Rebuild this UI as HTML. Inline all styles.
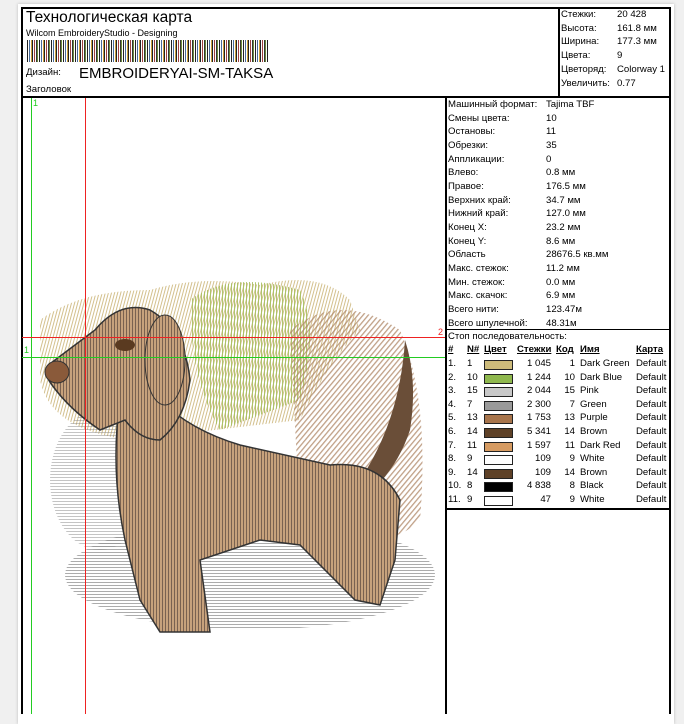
<!DOCTYPE html>
<html><head><meta charset="utf-8"><style>
*{margin:0;padding:0;box-sizing:border-box}
body{width:684px;height:714px;background:#f0f0f0;position:relative;overflow:hidden;font-family:"Liberation Sans",sans-serif;color:#000}
.page{position:absolute;left:18px;top:4px;width:656px;height:720px;background:#fff;box-shadow:0 0 3px #bbb}
.a{position:absolute;white-space:nowrap}
.s{font-size:9.6px}
.ln{position:absolute;background:#000}
</style></head><body>
<div class="page"></div>
<div class="ln" style="left:21px;top:7px;width:650px;height:2px"></div>
<div class="ln" style="left:21px;top:7px;width:1.5px;height:707px"></div>
<div class="ln" style="left:669px;top:7px;width:2px;height:707px"></div>
<div class="ln" style="left:21px;top:96px;width:650px;height:2px"></div>
<div class="ln" style="left:558px;top:7px;width:1.5px;height:90px"></div>
<div class="a" style="left:26px;top:9px;font-size:15.5px">Технологическая карта</div>
<div class="a s" style="left:26px;top:28px;font-size:9px">Wilcom EmbroideryStudio - Designing</div>
<div class="a" style="left:27px;top:40px;width:241px;height:22px;background:repeating-linear-gradient(90deg,#222 0 1px,#fff 1px 2px,#4a6c9a 2px 3px,#fff 3px 4px,#c8a040 4px 5px,#222 5px 6px,#fff 6px 7px,#a04040 7px 8px,#fff 8px 9px,#333 9px 10px,#6a8a3a 10px 11px,#fff 11px 12px)"></div>
<div class="a s" style="left:26px;top:67px">Дизайн:</div>
<div class="a" style="left:79px;top:65px;font-size:15px">EMBROIDERYAI-SM-TAKSA</div>
<div class="a s" style="left:26px;top:84px">Заголовок</div>
<div class="a s" style="left:561px;top:8px;line-height:13.7px">Стежки:<br>Высота:<br>Ширина:<br>Цвета:<br>Цветоряд:<br>Увеличить:</div>
<div class="a s" style="left:617px;top:8px;line-height:13.7px">20 428<br>161.8 мм<br>177.3 мм<br>9<br>Colorway 1<br>0.77</div>
<div class="ln" style="left:445px;top:97px;width:1.5px;height:617px"></div>
<div class="ln" style="left:445px;top:329px;width:226px;height:1px"></div>
<div class="ln" style="left:445px;top:508px;width:226px;height:2px"></div>
<div class="a s" style="left:448px;top:98px;line-height:13.65px">Машинный формат:<br>Смены цвета:<br>Остановы:<br>Обрезки:<br>Аппликации:<br>Влево:<br>Правое:<br>Верхних край:<br>Нижний край:<br>Конец X:<br>Конец Y:<br>Область<br>Макс. стежок:<br>Мин. стежок:<br>Макс. скачок:<br>Всего нити:<br>Всего шпулечной:</div>
<div class="a s" style="left:546px;top:98px;line-height:13.65px">Tajima TBF<br>10<br>11<br>35<br>0<br>0.8 мм<br>176.5 мм<br>34.7 мм<br>127.0 мм<br>23.2 мм<br>8.6 мм<br>28676.5 кв.мм<br>11.2 мм<br>0.0 мм<br>6.9 мм<br>123.47м<br>48.31м</div>
<div class="a s" style="left:448px;top:331px">Стоп последовательность:</div>
<div class="a s" style="left:448px;top:344px;font-weight:bold;text-decoration:underline">#</div>
<div class="a s" style="left:467px;top:344px;font-weight:bold;text-decoration:underline">N#</div>
<div class="a s" style="left:484px;top:344px;font-weight:bold;text-decoration:underline">Цвет</div>
<div class="a s" style="left:517px;top:344px;font-weight:bold;text-decoration:underline">Стежки</div>
<div class="a s" style="left:556px;top:344px;font-weight:bold;text-decoration:underline">Код</div>
<div class="a s" style="left:580px;top:344px;font-weight:bold;text-decoration:underline">Имя</div>
<div class="a s" style="left:636px;top:344px;font-weight:bold;text-decoration:underline">Карта</div>
<div id="rows"></div>
<script>
var r=[["1.","1","#cdbb7b","1 045","1","Dark Green"],["2.","10","#8fb84e","1 244","10","Dark Blue"],["3.","15","#c8c8c8","2 044","15","Pink"],["4.","7","#9a9a9a","2 300","7","Green"],["5.","13","#a8754c","1 753","13","Purple"],["6.","14","#5e4127","5 341","14","Brown"],["7.","11","#d69b62","1 597","11","Dark Red"],["8.","9","#ffffff","109","9","White"],["9.","14","#5e4127","109","14","Brown"],["10.","8","#000000","4 838","8","Black"],["11.","9","#ffffff","47","9","White"]];
var h="";r.forEach(function(x,i){var y=358+i*13.6;
h+='<div class="a s" style="left:448px;top:'+y+'px">'+x[0]+'</div><div class="a s" style="left:467px;top:'+y+'px">'+x[1]+'</div><div class="a" style="left:484px;top:'+(y+2)+'px;width:29px;height:10px;background:'+x[2]+';border:1px solid #222"></div><div class="a s" style="left:511px;width:40px;text-align:right;top:'+y+'px">'+x[3]+'</div><div class="a s" style="left:552px;width:23px;text-align:right;top:'+y+'px">'+x[4]+'</div><div class="a s" style="left:580px;top:'+y+'px">'+x[5]+'</div><div class="a s" style="left:636px;top:'+y+'px">Default</div>';});
document.getElementById("rows").innerHTML=h;
</script>
<svg style="position:absolute;left:22px;top:98px" width="423" height="616" viewBox="22 98 423 616">
<defs>
<pattern id="v" width="3" height="3" patternUnits="userSpaceOnUse"><rect width="3" height="3" fill="#c7a27c"/><rect width="1" height="3" fill="#7a6250"/></pattern>
<pattern id="y" width="3" height="3" patternUnits="userSpaceOnUse" patternTransform="rotate(15)"><rect width="1" height="3" fill="#c8b070"/></pattern>
<pattern id="g" width="3" height="3" patternUnits="userSpaceOnUse"><rect width="1" height="3" fill="#a8c060"/></pattern>
<pattern id="d" width="4" height="4" patternUnits="userSpaceOnUse" patternTransform="rotate(40)"><rect width="1.3" height="4" fill="#b08868"/></pattern>
<pattern id="h" width="6" height="3" patternUnits="userSpaceOnUse"><rect width="6" height="1" fill="#888"/></pattern>
</defs>
<path d="M40 320 Q80 290 150 290 Q200 275 260 285 Q320 270 350 300 L360 330 Q330 360 300 420 L130 440 Q50 430 40 380Z" fill="url(#y)" opacity=".8"/>
<path d="M190 300 Q230 270 300 290 Q320 330 300 400 L220 430 Q190 380 190 300Z" fill="url(#g)" opacity=".9"/>
<path d="M290 330 Q340 290 400 330 Q430 400 420 520 Q380 560 300 520Z" fill="url(#d)" opacity=".8"/>
<ellipse cx="250" cy="575" rx="185" ry="55" fill="url(#h)" opacity=".7"/>
<ellipse cx="100" cy="480" rx="50" ry="70" fill="url(#h)" opacity=".5"/>
<path d="M360 480 Q400 420 405 340 Q418 380 410 430 Q395 475 360 500Z" fill="#6a4e38"/>
<path d="M120 400 Q110 470 125 540 L140 600 L160 632 L210 632 L200 560 L260 540 L300 545 L355 600 L380 605 L395 560 L400 500 Q380 460 330 465 L240 445 Q190 430 160 400Z" fill="url(#v)" stroke="#333" stroke-width="1.5"/>
<path d="M95 330 Q120 300 150 310 Q185 330 190 380 Q185 420 160 440 Q140 440 125 420 L100 430 Q70 410 52 385 Q40 370 55 360 Q75 345 95 330Z" fill="url(#v)" stroke="#333" stroke-width="1.5"/>
<ellipse cx="57" cy="372" rx="12" ry="11" fill="#8a5a3a" stroke="#333"/>
<ellipse cx="125" cy="345" rx="10" ry="6" fill="#5a3a20"/>
<ellipse cx="165" cy="360" rx="20" ry="45" fill="url(#v)" stroke="#333"/>
</svg>
<div class="ln" style="left:31px;top:98px;width:1px;height:616px;background:#22cc22"></div>
<div class="ln" style="left:85px;top:98px;width:1px;height:616px;background:#ee2222"></div>
<div class="ln" style="left:22px;top:337px;width:423px;height:1px;background:#ee2222"></div>
<div class="ln" style="left:22px;top:357px;width:423px;height:1px;background:#22cc22"></div>
<div class="a" style="left:33px;top:98px;font-size:9px;color:#2c2">1</div>
<div class="a" style="left:24px;top:345px;font-size:9px;color:#2c2">1</div>
<div class="a" style="left:438px;top:327px;font-size:9px;color:#e22">2</div>
</body></html>
